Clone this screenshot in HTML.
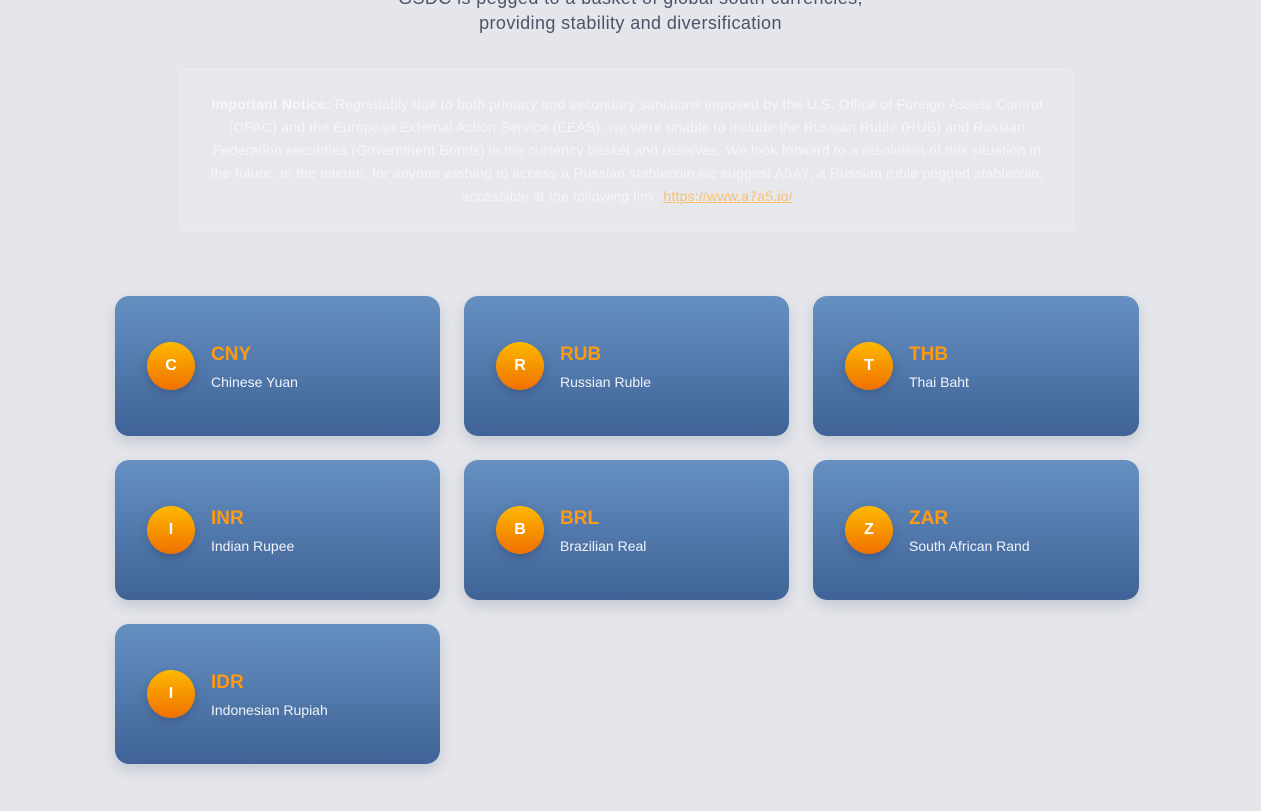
<!DOCTYPE html>
<html><head><meta charset="utf-8"><style>
*{margin:0;padding:0;box-sizing:border-box}
body{width:1261px;height:811px;background:#e5e6eb;font-family:"Liberation Sans",sans-serif;position:relative;overflow:hidden}
.sub{position:absolute;top:-14px;left:0;width:1261px;text-align:center;color:#4b5468;font-size:18px;line-height:25px;letter-spacing:0.4px}
.notice{position:absolute;left:180px;top:69px;width:894px;height:162px;border:1px solid #eceef2;border-radius:6px;background:#e7e8ec;padding:23px 0 0;text-align:center;color:#f5f6f8;font-size:14px;line-height:23px;white-space:nowrap;letter-spacing:0.2px}
.notice b{color:#f7f7f9}
.notice a{color:#fcbf6e;text-decoration:underline}
.card{position:absolute;width:325px;height:140px;border-radius:14px;background:linear-gradient(#6690c2,#3f6396);box-shadow:0 6px 14px rgba(40,60,100,.18)}
.c{position:absolute;left:32px;top:46px;width:48px;height:48px;border-radius:50%;background:linear-gradient(#fdb900,#f07000);color:#fff;font-weight:bold;font-size:16px;text-align:center;line-height:48px;box-shadow:0 4px 8px rgba(30,50,90,.3)}
.code{position:absolute;left:96px;top:48px;color:#ff9a10;font-weight:bold;font-size:19px}
.name{position:absolute;left:96px;top:78px;color:#eef2f8;font-size:14px}
</style></head><body>
<div class="sub">GSDC is pegged to a basket of global south currencies,<br>providing stability and diversification</div>
<div class="notice"><b>Important Notice:</b> Regrettably due to both primary and secondary sanctions imposed by the U.S. Office of Foreign Assets Control<br>(OFAC) and the European External Action Service (EEAS), we were unable to include the Russian Ruble (RUB) and Russian<br>Federation securities (Government Bonds) in the currency basket and reserves. We look forward to a resolution of this situation in<br>the future. In the interim, for anyone wishing to access a Russian stablecoin we suggest A5A7, a Russian ruble pegged stablecoin,<br>accessible at the following link: <a>https://www.a7a5.io/</a></div>
<div class="card" style="left:115px;top:296px"><div class="c">C</div><div class="code">CNY</div><div class="name">Chinese Yuan</div></div>
<div class="card" style="left:464px;top:296px"><div class="c">R</div><div class="code">RUB</div><div class="name">Russian Ruble</div></div>
<div class="card" style="left:813px;top:296px;width:326px"><div class="c">T</div><div class="code">THB</div><div class="name">Thai Baht</div></div>
<div class="card" style="left:115px;top:460px"><div class="c">I</div><div class="code">INR</div><div class="name">Indian Rupee</div></div>
<div class="card" style="left:464px;top:460px"><div class="c">B</div><div class="code">BRL</div><div class="name">Brazilian Real</div></div>
<div class="card" style="left:813px;top:460px;width:326px"><div class="c">Z</div><div class="code">ZAR</div><div class="name">South African Rand</div></div>
<div class="card" style="left:115px;top:624px"><div class="c">I</div><div class="code">IDR</div><div class="name">Indonesian Rupiah</div></div>
</body></html>
